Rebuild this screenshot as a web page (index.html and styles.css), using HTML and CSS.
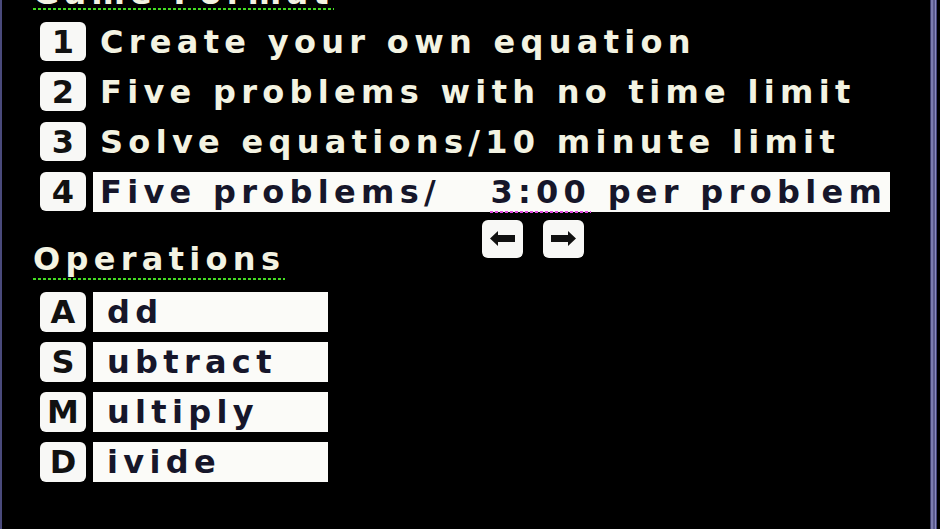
FILE: index.html
```html
<!DOCTYPE html>
<html>
<head>
<meta charset="utf-8">
<link rel="stylesheet" href="styles.css">
</head>
<body>
<div class="screen">
  <div class="edge-left"></div>
  <main class="content">
    <h1 class="heading title">Game Format</h1>
    <ul class="formats">
      <li class="row"><span class="key">1</span><span class="label">Create your own equation</span></li>
      <li class="row"><span class="key">2</span><span class="label">Five problems with no time limit</span></li>
      <li class="row"><span class="key">3</span><span class="label">Solve equations/10 minute limit</span></li>
      <li class="row selected"><span class="key">4</span><span class="label">Five problems/&nbsp;&nbsp; <span class="time">3:00</span> per problem</span></li>
    </ul>
    <div class="mid">
      <h2 class="heading ops-title">Operations</h2>
      <div class="arrows">
        <span class="arrow"><svg viewBox="0 0 41 38" width="41" height="38"><polygon points="8,18.5 16,11 16,15 33,15 33,22 16,22 16,26" fill="#111"/></svg></span>
        <span class="arrow"><svg viewBox="0 0 41 38" width="41" height="38"><polygon points="33,18.5 25,11 25,15 8,15 8,22 25,22 25,26" fill="#111"/></svg></span>
      </div>
    </div>
    <ul class="ops">
      <li class="op"><span class="key">A</span><span class="bar">dd</span></li>
      <li class="op"><span class="key">S</span><span class="bar">ubtract</span></li>
      <li class="op"><span class="key">M</span><span class="bar">ultiply</span></li>
      <li class="op"><span class="key">D</span><span class="bar">ivide</span></li>
    </ul>
  </main>
  <div class="edge-right"></div>
</div>
</body>
</html>
```

FILE: styles.css
```css
html, body {
  margin: 0;
  padding: 0;
  background: #000;
}
body {
  width: 940px;
  height: 529px;
  overflow: hidden;
  font-family: "DejaVu Sans", "Liberation Sans", sans-serif;
  font-weight: bold;
}
.screen {
  display: flex;
  width: 940px;
  height: 529px;
  background: #000;
}
.edge-left {
  width: 2px;
  background: #4a4a7c;
}
.content {
  flex: 1;
  padding-left: 31px;
  color: #f3f3e2;
  font-size: 32px;
  letter-spacing: 5.3px;
}
.edge-right {
  width: 7px;
  margin-right: 3px;
  background: linear-gradient(90deg, #3c3c6a 0 1px, #7c7cb0 1px 3px, #5a5a8e 3px 5px, #8a8ac0 5px 6px, #44447a 6px 7px);
}
.heading {
  display: block;
  width: fit-content;
  margin: 0;
  font-size: 32px;
  font-weight: bold;
  line-height: 30px;
  padding-bottom: 6px;
  background: repeating-linear-gradient(90deg, #44dd22 0 3px, transparent 3px 5px) left bottom / 100% 2px no-repeat;
}
.title {
  margin-top: -22px;
  padding-bottom: 2px;
}
.formats, .ops {
  list-style: none;
  margin: 0;
  padding: 0;
}
.formats {
  margin-top: 12px;
  display: flex;
  flex-direction: column;
  gap: 11px;
}
.row {
  display: flex;
  align-items: center;
  height: 39px;
}
.key {
  width: 46px;
  height: 39px;
  margin-left: 7px;
  background: #f8f8f6;
  color: #111;
  border-radius: 6px;
  display: flex;
  align-items: center;
  justify-content: center;
  letter-spacing: 0;
  flex: none;
}
.label {
  margin-left: 7px;
  padding-left: 7px;
  line-height: 40px;
  height: 40px;
  white-space: nowrap;
}
.selected .label {
  background: #fbfbf8;
  color: #16162a;
  width: 797px;
  box-sizing: border-box;
}
.time {
  background: repeating-linear-gradient(90deg, #e050e0 0 3px, transparent 3px 5px) left bottom / 100% 2px no-repeat;
  padding-bottom: 2px;
}
.mid {
  display: grid;
  grid-template-columns: 449px auto;
  align-items: start;
  margin-top: 9px;
}
.ops-title {
  margin-top: 24px;
  justify-self: start;
}
.arrows {
  display: flex;
  gap: 20px;
}
.arrow {
  width: 41px;
  height: 38px;
  background: #f8f8f6;
  border-radius: 6px;
  display: block;
}
.arrow svg {
  display: block;
}
.ops {
  margin-top: 12px;
  display: flex;
  flex-direction: column;
  gap: 10px;
}
.op {
  display: flex;
  align-items: center;
  height: 40px;
}
.op .key {
  height: 40px;
}
.bar {
  margin-left: 7px;
  width: 235px;
  height: 40px;
  line-height: 40px;
  padding-left: 14px;
  box-sizing: border-box;
  background: #fbfbf8;
  color: #16162a;
}
```
